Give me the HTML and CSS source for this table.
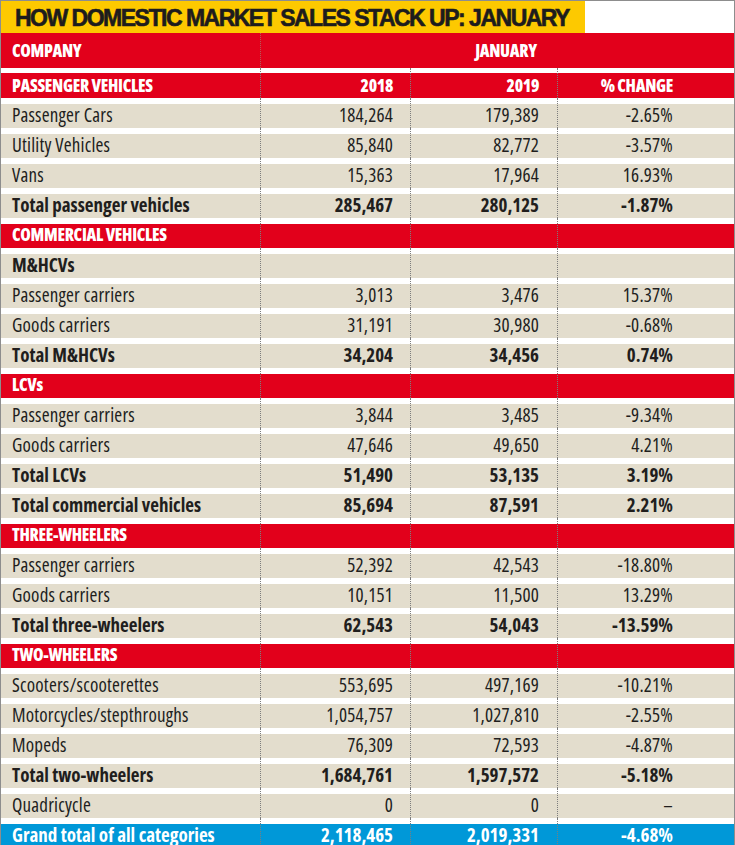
FILE: index.html
```html
<!DOCTYPE html>
<html lang="en">
<head>
<meta charset="utf-8">
<title>How domestic market sales stack up: January</title>
<link rel="stylesheet" href="styles.css">
</head>
<body>
<div class="sheet">
  <div class="title-row">
    <h1 class="title">HOW DOMESTIC MARKET SALES STACK UP: JANUARY</h1>
  </div>

  <div class="row top">
    <div class="c1 hd">COMPANY</div>
    <div class="span hd">JANUARY</div>
  </div>

  <div class="row sec first">
    <div class="c1 hd">PASSENGER VEHICLES</div>
    <div class="c2 hd">2018</div>
    <div class="c3 hd">2019</div>
    <div class="c4 hd">% CHANGE</div>
  </div>

  <div class="row"><div class="c1">Passenger Cars</div><div class="c2">184,264</div><div class="c3">179,389</div><div class="c4">-2.65%</div></div>
  <div class="row"><div class="c1">Utility Vehicles</div><div class="c2">85,840</div><div class="c3">82,772</div><div class="c4">-3.57%</div></div>
  <div class="row"><div class="c1">Vans</div><div class="c2">15,363</div><div class="c3">17,964</div><div class="c4">16.93%</div></div>
  <div class="row bold"><div class="c1">Total passenger vehicles</div><div class="c2">285,467</div><div class="c3">280,125</div><div class="c4">-1.87%</div></div>

  <div class="row sec"><div class="c1 hd">COMMERCIAL VEHICLES</div><div class="c2"></div><div class="c3"></div><div class="c4"></div></div>
  <div class="row bold"><div class="c1">M&amp;HCVs</div><div class="c2"></div><div class="c3"></div><div class="c4"></div></div>
  <div class="row"><div class="c1">Passenger carriers</div><div class="c2">3,013</div><div class="c3">3,476</div><div class="c4">15.37%</div></div>
  <div class="row"><div class="c1">Goods carriers</div><div class="c2">31,191</div><div class="c3">30,980</div><div class="c4">-0.68%</div></div>
  <div class="row bold"><div class="c1">Total M&amp;HCVs</div><div class="c2">34,204</div><div class="c3">34,456</div><div class="c4">0.74%</div></div>

  <div class="row sec"><div class="c1 hd">LCVs</div><div class="c2"></div><div class="c3"></div><div class="c4"></div></div>
  <div class="row"><div class="c1">Passenger carriers</div><div class="c2">3,844</div><div class="c3">3,485</div><div class="c4">-9.34%</div></div>
  <div class="row"><div class="c1">Goods carriers</div><div class="c2">47,646</div><div class="c3">49,650</div><div class="c4">4.21%</div></div>
  <div class="row bold"><div class="c1">Total LCVs</div><div class="c2">51,490</div><div class="c3">53,135</div><div class="c4">3.19%</div></div>
  <div class="row bold"><div class="c1">Total commercial vehicles</div><div class="c2">85,694</div><div class="c3">87,591</div><div class="c4">2.21%</div></div>

  <div class="row sec"><div class="c1 hd">THREE-WHEELERS</div><div class="c2"></div><div class="c3"></div><div class="c4"></div></div>
  <div class="row"><div class="c1">Passenger carriers</div><div class="c2">52,392</div><div class="c3">42,543</div><div class="c4">-18.80%</div></div>
  <div class="row"><div class="c1">Goods carriers</div><div class="c2">10,151</div><div class="c3">11,500</div><div class="c4">13.29%</div></div>
  <div class="row bold"><div class="c1">Total three-wheelers</div><div class="c2">62,543</div><div class="c3">54,043</div><div class="c4">-13.59%</div></div>

  <div class="row sec"><div class="c1 hd">TWO-WHEELERS</div><div class="c2"></div><div class="c3"></div><div class="c4"></div></div>
  <div class="row"><div class="c1">Scooters/scooterettes</div><div class="c2">553,695</div><div class="c3">497,169</div><div class="c4">-10.21%</div></div>
  <div class="row"><div class="c1">Motorcycles/stepthroughs</div><div class="c2">1,054,757</div><div class="c3">1,027,810</div><div class="c4">-2.55%</div></div>
  <div class="row"><div class="c1">Mopeds</div><div class="c2">76,309</div><div class="c3">72,593</div><div class="c4">-4.87%</div></div>
  <div class="row bold"><div class="c1">Total two-wheelers</div><div class="c2">1,684,761</div><div class="c3">1,597,572</div><div class="c4">-5.18%</div></div>

  <div class="row"><div class="c1">Quadricycle</div><div class="c2">0</div><div class="c3">0</div><div class="c4">–</div></div>

  <div class="row grand bold"><div class="c1">Grand total of all categories</div><div class="c2">2,118,465</div><div class="c3">2,019,331</div><div class="c4">-4.68%</div></div>
</div>
</body>
</html>
```
FILE: styles.css
```css
* { box-sizing: border-box; }

html, body {
  margin: 0;
  padding: 0;
  background: #fff;
}

body {
  width: 735px;
  height: 845px;
  overflow: hidden;
  font-family: "Open Sans", "Liberation Sans", Arial, sans-serif;
  font-stretch: 75%;
  color: #211e1d;
}

.sheet {
  width: 735px;
  border-top: 1px solid #8d8d8d;
  border-left: 1px solid #8d8d8d;
  border-right: 1px solid #8d8d8d;
}

.title-row {
  height: 32px;
  background: #fff;
}

.title {
  margin: 0;
  width: 584px;
  height: 32px;
  background: #fdc900;
  padding-left: 14px;
  font-family: "Liberation Sans", Arial, sans-serif;
  font-stretch: normal;
  font-weight: 700;
  font-size: 23px;
  line-height: 34px;
  letter-spacing: -1.5px;
  color: #1d1c1d;
  -webkit-text-stroke: 0.6px #1d1c1d;
  white-space: nowrap;
}

.row {
  --band: #e3ddcd;
  --gap: 6px;
  display: grid;
  grid-template-columns: 259px 150px 147px 177px;
  height: 30px;
  font-size: 19px;
  letter-spacing: 0.2px;
  line-height: 22px;
}

.row > div {
  padding-top: var(--gap);
  background: linear-gradient(to bottom, #fff 0, #fff var(--gap), var(--band) var(--gap), var(--band) 100%);
  white-space: nowrap;
}

.row .c1 { padding-left: 11px; }
.row .c2 { text-align: right; padding-right: 17px; border-left: 1px dotted #7d7d7d; }
.row .c3 { text-align: right; padding-right: 18px; border-left: 1px dotted #7d7d7d; }
.row .c4 { text-align: right; padding-right: 61px; border-left: 1px dotted #7d7d7d; }

.row.bold {
  font-weight: 700;
  letter-spacing: 0;
}

.row.sec {
  --band: #e2001b;
  color: #fff;
}

.row.first {
  --gap: 5px;
  line-height: 25px;
}

.row.top {
  --band: #e2001b;
  --gap: 0px;
  grid-template-columns: 259px 474px;
  height: 35px;
  line-height: 35px;
  color: #fff;
}

.row.top .span {
  text-align: center;
  padding-left: 17px;
  border-left: 1px dotted #b35a5a;
}

.hd {
  font-weight: 800;
  font-size: 17px;
  letter-spacing: -0.3px;
  color: #fff;
}

.row.grand {
  --band: #0098d8;
  color: #fff;
}
```
